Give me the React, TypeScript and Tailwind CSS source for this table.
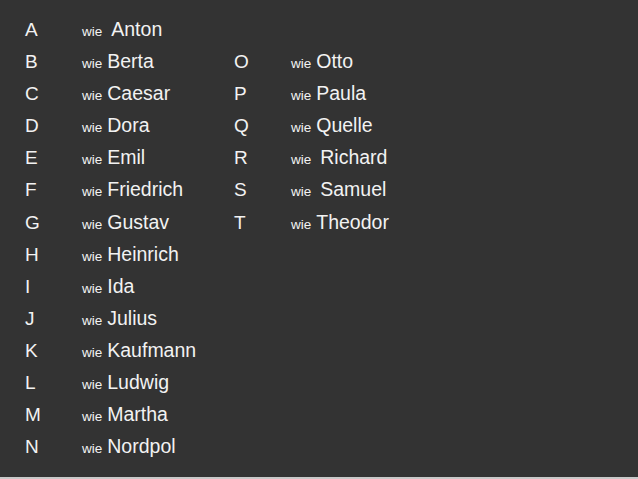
import React from 'react';

type Entry = { letter: string; name: string; wide?: boolean };

const left: Entry[] = [
  { letter: 'A', name: 'Anton', wide: true },
  { letter: 'B', name: 'Berta' },
  { letter: 'C', name: 'Caesar' },
  { letter: 'D', name: 'Dora' },
  { letter: 'E', name: 'Emil' },
  { letter: 'F', name: 'Friedrich' },
  { letter: 'G', name: 'Gustav' },
  { letter: 'H', name: 'Heinrich' },
  { letter: 'I', name: 'Ida' },
  { letter: 'J', name: 'Julius' },
  { letter: 'K', name: 'Kaufmann' },
  { letter: 'L', name: 'Ludwig' },
  { letter: 'M', name: 'Martha' },
  { letter: 'N', name: 'Nordpol' },
];

const right: Entry[] = [
  { letter: 'O', name: 'Otto' },
  { letter: 'P', name: 'Paula' },
  { letter: 'Q', name: 'Quelle' },
  { letter: 'R', name: 'Richard', wide: true },
  { letter: 'S', name: 'Samuel', wide: true },
  { letter: 'T', name: 'Theodor' },
];

function Row({ entry }: { entry: Entry }) {
  return (
    <div className="flex items-baseline h-[32.1px] leading-[32.1px]">
      <span className="w-[57px] text-[19px]">{entry.letter}</span>
      <span className="text-[13.5px]">wie</span>
      <span className={`text-[19.5px] ${entry.wide ? 'ml-[9px]' : 'ml-[5px]'}`}>{entry.name}</span>
    </div>
  );
}

export default function App() {
  return (
    <div
      className="w-[638px] h-[479px] bg-[#333333] text-[#f2f2f2] border-b-2 border-[#c9c9c9] overflow-hidden"
      style={{ fontFamily: '"Liberation Sans", Arial, sans-serif' }}
    >
      <div className="flex pt-[13px] pl-[25px]">
        <div className="w-[209px]">
          {left.map(e => (
            <Row key={e.letter} entry={e} />
          ))}
        </div>
        <div className="pt-[32.1px]">
          {right.map(e => (
            <Row key={e.letter} entry={e} />
          ))}
        </div>
      </div>
    </div>
  );
}
